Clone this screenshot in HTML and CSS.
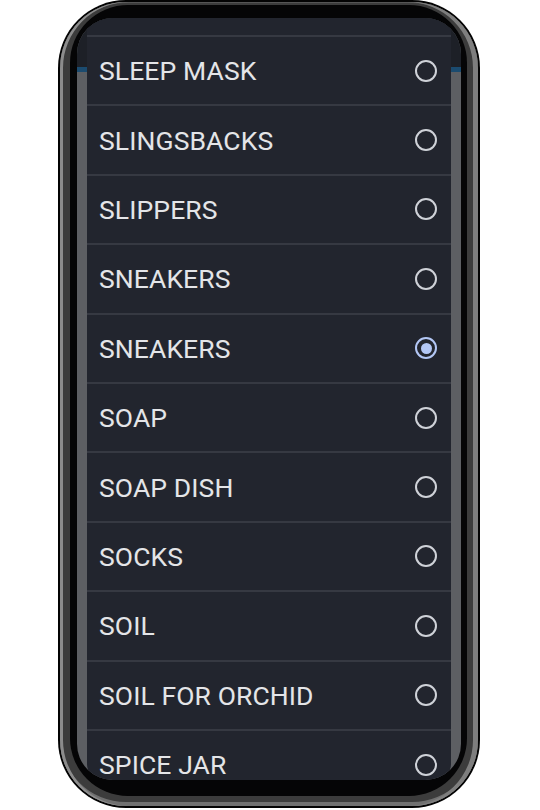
FILE: index.html
```html
<!DOCTYPE html>
<html>
<head>
<meta charset="utf-8">
<link rel="stylesheet" href="styles.css">
</head>
<body>
<div class="phone">
  <div class="bevel">
    <div class="inner">
      <div class="screen">
        <div class="appbar"></div>
        <div class="dialog">
          <ul class="list">
            <li class="row"><span class="label"></span><span class="radio"></span></li>
            <li class="row"><span class="label">SLEEP MASK</span><span class="radio"></span></li>
            <li class="row"><span class="label">SLINGSBACKS</span><span class="radio"></span></li>
            <li class="row"><span class="label">SLIPPERS</span><span class="radio"></span></li>
            <li class="row"><span class="label">SNEAKERS</span><span class="radio"></span></li>
            <li class="row"><span class="label">SNEAKERS</span><span class="radio checked"></span></li>
            <li class="row"><span class="label">SOAP</span><span class="radio"></span></li>
            <li class="row"><span class="label">SOAP DISH</span><span class="radio"></span></li>
            <li class="row"><span class="label">SOCKS</span><span class="radio"></span></li>
            <li class="row"><span class="label">SOIL</span><span class="radio"></span></li>
            <li class="row"><span class="label">SOIL FOR ORCHID</span><span class="radio"></span></li>
            <li class="row"><span class="label">SPICE JAR</span><span class="radio"></span></li>
          </ul>
        </div>
      </div>
    </div>
  </div>
</div>
</body>
</html>
```

FILE: styles.css
```css
* { box-sizing: border-box; }
html, body {
  margin: 0;
  padding: 0;
  background: #ffffff;
  width: 540px;
  height: 810px;
  overflow: hidden;
  font-family: Roboto, "Noto Sans", sans-serif;
}
.phone {
  margin-left: 58px;
  width: 422px;
  height: 808px;
  border-radius: 68px;
  background: #030303;
  padding: 2px;
}
.bevel {
  height: 100%;
  border-radius: 66px;
  background: #3c3c3c;
  box-shadow: inset 3px 0 0 #8c8c8c, inset -5px 0 0 #7e7e7e, inset 0 1px 0 #555, inset 0 -4px 0 #707070;
  padding: 3px 11px 10px 10px;
}
.inner {
  height: 100%;
  border-radius: 58px;
  background: #050506;
  padding: 13px 6px 16px 7px;
}
.screen {
  position: relative;
  height: 100%;
  border-radius: 36px;
  overflow: hidden;
  background: #5d5f63;
}
.appbar {
  height: 54px;
  background: #1d2027;
  border-bottom: 5px solid #1b4b6f;
}
.dialog {
  position: absolute;
  left: 10px;
  right: 10px;
  top: 0;
  bottom: 0;
  background: #22252e;
  border-radius: 0 0 16px 16px;
  overflow: hidden;
}
.list {
  list-style: none;
  margin: -50.4px 0 0 0;
  padding: 0;
}
.row {
  height: 69.4px;
  border-bottom: 2px solid #363942;
  display: flex;
  align-items: center;
  justify-content: space-between;
  padding: 0 14px 0 12px;
}
.label {
  color: #e4e5e8;
  font-size: 26.5px;
  letter-spacing: 0.1px;
}
.radio {
  width: 22px;
  height: 22px;
  border-radius: 50%;
  border: 2px solid #cfd2d8;
  display: flex;
  align-items: center;
  justify-content: center;
}
.radio.checked {
  border-color: #b3c7f5;
}
.radio.checked::after {
  content: "";
  width: 11px;
  height: 11px;
  border-radius: 50%;
  background: #b3c7f5;
}
```
